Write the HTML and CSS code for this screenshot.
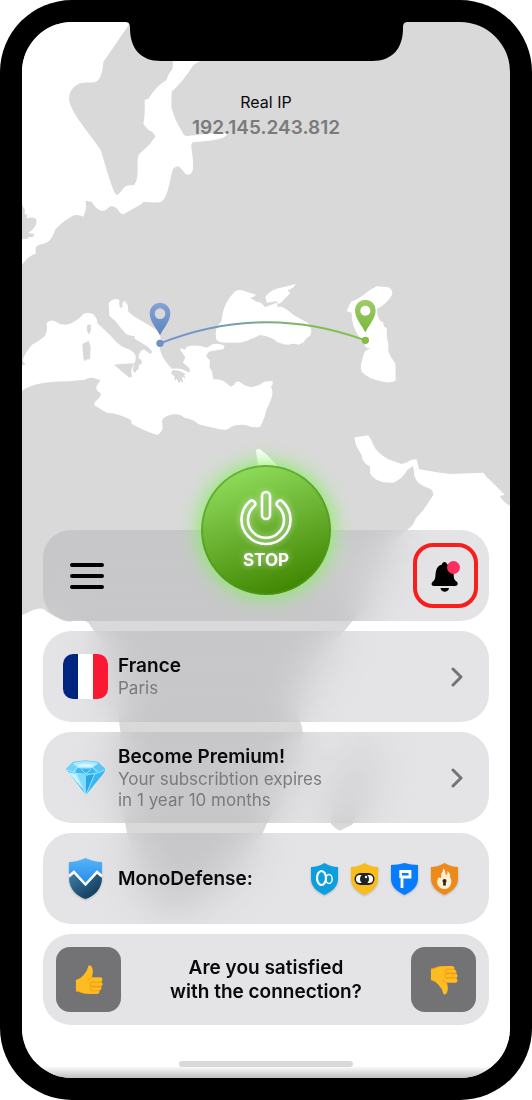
FILE: index.html
```html
<!DOCTYPE html>
<html lang="en">
<head>
    <meta charset="UTF-8">
    <meta name="viewport" content="width=device-width, initial-scale=1.0">
    <title>VPN</title>
    <link rel="stylesheet" href="styles.css">
</head>
<body>
    <div class="phone">
        <div class="screen">
            <svg class="map" viewBox="66 66 1464 3168" preserveAspectRatio="xMidYMax slice" aria-hidden="true">
                <defs>
                    <linearGradient id="route" x1="0" x2="1" y1="0" y2="0">
                        <stop offset="0.2" stop-color="#7394cd"/>
                        <stop offset="0.8" stop-color="#82bf48"/>
                    </linearGradient>
                    <linearGradient id="pinBlue" x1="0" x2="0" y1="0" y2="1">
                        <stop offset="0" stop-color="#84a2d6"/>
                        <stop offset="1" stop-color="#6084c0"/>
                    </linearGradient>
                    <linearGradient id="pinGreen" x1="0" x2="0" y1="0" y2="1">
                        <stop offset="0" stop-color="#a0cc6a"/>
                        <stop offset="1" stop-color="#78b83a"/>
                    </linearGradient>
                </defs>
                <g class="sea">
                    <!-- north and baltic sea -->
                    <path d="M60 60H386L388 72L310 186Q306 240 285 246C265 250 262 244 240 250Q207 264 207 295C207 335 270 400 302 450C318 500 330 550 346 582L352 585Q362 580 370 565Q378 554 403 555Q414 540 413 500Q411 466 420 460L445 437L466 410Q460 394 445 390L430 372Q436 340 434 300L445 296Q470 256 500 240Q502 225 518 206L519 180H606L580 195Q550 244 515 275L514 320Q524 360 545 392Q550 408 562 408L640 400L685 400Q672 420 620 423L580 427Q570 430 576 455Q582 500 577 515Q568 530 556 521Q540 500 533 499Q520 502 517 512C510 540 502 605 478 607Q450 608 432 605Q420 616 410 620L370 643Q358 640 355 630Q345 616 330 619Q315 636 305 632Q288 628 275 605L256 602Q260 614 257 630L250 650Q235 642 222 646Q190 662 165 690Q155 726 130 732Q108 734 107 745V762Q90 766 80 778L60 800V718L82 716Q84 710 100 710L103 703L85 698Q110 684 110 660Q105 648 80 655L82 644L74 642L75 630L60 605Z"/>
                    <!-- mediterranean -->
                    <path d="M60 1098L77 1093L68 1084Q70 1066 95 1035Q115 1025 135 1008Q144 990 139 970Q150 956 168 965Q185 978 205 973Q232 964 250 942Q266 936 280 943Q292 955 292 970L330 1005Q350 1030 370 1042Q398 1050 406 1065Q410 1080 402 1092L398 1112L406 1118Q410 1108 415 1108L417 1095L426 1090L424 1080L415 1074Q418 1052 432 1048L445 1058L453 1062L456 1054Q446 1040 430 1032L404 1016L404 1008Q382 1008 372 995L345 962L328 947L326 910Q335 896 352 897Q362 900 357 908L360 924L368 920Q364 908 373 902L383 915L385 935Q400 950 420 960Q450 976 472 992Q482 1002 482 1020L480 1050Q486 1072 500 1088L515 1106Q530 1104 545 1107L568 1118L558 1122L538 1112L518 1110L513 1120L524 1130V1144L530 1136L537 1150L542 1142L550 1150L546 1130L557 1136L552 1124L570 1116L568 1104L549 1088L556 1072L541 1050L544 1044L554 1050L560 1040Q590 1032 620 1043L640 1032Q660 1030 674 1038L670 1048L640 1052L626 1055L618 1068L630 1082L628 1100L636 1115L640 1138Q665 1136 680 1150L692 1160L702 1155Q708 1140 720 1146Q742 1164 760 1160Q780 1156 792 1145L818 1142V1152L813 1160L817 1172Q820 1190 800 1228Q792 1262 780 1280Q765 1286 735 1275Q700 1272 684 1288Q670 1292 640 1283Q614 1278 594 1272Q582 1258 555 1254Q540 1240 520 1243Q490 1248 486 1262L488 1285Q480 1305 470 1304Q440 1296 395 1272Q396 1258 380 1254Q355 1240 320 1238L283 1216Q283 1204 292 1200Q304 1188 302 1180Q284 1168 290 1158L302 1140L290 1137Q270 1128 255 1139L205 1144Q150 1144 110 1153Q80 1160 60 1178Z"/>
                    <!-- black sea and azov -->
                    <path d="M650 1020Q640 985 664 965Q668 920 690 892L705 874Q722 866 740 875L768 884Q762 892 750 893L770 905Q786 906 795 922L820 912L832 908V920H842Q856 922 880 945L925 970Q940 990 930 1008Q915 1016 912 1026L895 1034Q882 1028 865 1034Q850 1034 830 1025Q815 1010 780 1005Q745 1022 720 1028H680Q655 1028 650 1020Z"/>
                    <path d="M796 890Q810 872 830 866L888 852L880 862L862 873L872 878L848 903L838 912L828 904L800 908Z"/>
                    <!-- caspian -->
                    <path d="M1040 933L1053 905Q1080 896 1105 873L1130 859L1165 862Q1180 868 1176 886Q1160 912 1130 928L1134 950Q1140 966 1150 967Q1148 982 1161 984Q1158 1010 1165 1030V1055Q1172 1072 1186 1090L1187 1142Q1170 1150 1150 1145Q1105 1138 1086 1116Q1080 1108 1084 1090L1092 1060Q1094 1052 1110 1045Q1094 1044 1094 1034Q1068 1002 1060 975Q1054 955 1055 938Z"/>
                    <!-- persian gulf, indian ocean and atlantic around africa -->
                    <path d="M1063 1312L1075 1310L1105 1306Q1116 1322 1120 1335Q1130 1358 1165 1378L1205 1392Q1225 1386 1234 1379L1250 1378L1257 1408Q1300 1416 1350 1422L1450 1418Q1460 1434 1472 1442L1514 1484L1500 1488Q1510 1510 1540 1522V3240H60V1848L100 1830Q118 1822 132 1828Q146 1842 190 1862L210 1865Q240 1850 265 1868L280 1890L310 1940L345 2040L357 2165L362 2200L350 2320L376 2472L382 2505L440 2690Q500 2740 590 2700L700 2620L787 2502L802 2468L840 2390L880 2300L908 2200Q908 2176 896 2160L890 2080L960 1970L1033 1893L1060 1860L1130 1770L1110 1720L1200 1610L1238 1575L1248 1555L1270 1530L1300 1485Q1300 1468 1285 1464Q1240 1450 1242 1412L1238 1398L1222 1410Q1210 1430 1195 1440L1180 1448L1150 1447Q1120 1440 1110 1420V1400Q1085 1385 1086 1368L1068 1336Z"/>
                    <path d="M768 1352Q770 1344 780 1348L801 1364L835 1400L900 1540L1010 1680L1000 1720L960 1690L850 1540L775 1400Z"/>
                </g>
                <g class="land">
                    <path d="M262 975L272 972L273 990L267 1004L260 990Z"/>
                    <path d="M247 1032L266 1022L272 1040L270 1078L262 1078L252 1084L249 1064Z"/>
                    <path d="M342 1094L360 1092L402 1090L393 1112L396 1130L388 1133L372 1120Z"/>
                    <path d="M1000 2400L1060 2270L1120 2220L1115 2330L1062 2465Q1058 2476 1040 2482L1020 2492Q1004 2486 992 2470Z"/>
                </g>
                <path class="route" d="M480 1030Q790 908 1096 1021"/>
                <circle cx="480" cy="1030" r="11" fill="#7090c8"/>
                <circle cx="1096" cy="1021" r="11" fill="#7fbd43"/>
                <path fill="url(#pinBlue)" fill-rule="evenodd" d="M480 1006C470 984 449 966 449 939A31 31 0 0 1 511 939C511 966 490 984 480 1006ZM480 925A15 15 0 1 0 480 957A15 15 0 1 0 480 925Z"/>
                <path fill="url(#pinGreen)" d="M1096 997C1086 975 1065 957 1065 930A31 31 0 0 1 1127 930C1127 957 1106 975 1096 997Z"/>
                <circle cx="1096" cy="932" r="15" fill="#fff"/>
            </svg>

            <svg class="notch" viewBox="0 0 283 39" aria-hidden="true">
                <path d="M0 0C4 0 5 2 5 6C5 26 15 39 36 39H247C268 39 278 26 278 6C278 2 279 0 283 0Z"/>
            </svg>

            <header class="ip">
                <div class="ip-label">Real IP</div>
                <div class="ip-value">192.145.243.812</div>
            </header>

            <main class="cards">
                <nav class="card toolbar">
                    <button class="tool" aria-label="Menu">
                        <svg width="34" height="26" viewBox="0 0 34 26"><path d="M2 2H32M2 13H32M2 24H32" stroke="#000" stroke-width="4" stroke-linecap="round"/></svg>
                    </button>
                    <button class="power">
                        <svg width="56" height="56" viewBox="0 0 56 56" fill="none" stroke="#fff" stroke-width="2.6">
                            <rect x="24" y="2" width="8" height="27" rx="4"/>
                            <path d="M12 11A24.500 24.500 0 1 0 44 11C41 9 37 13 39.500 16A18 18 0 1 1 16.500 16C19 13 15 9 12 11Z" stroke-linejoin="round"/>
                        </svg>
                        STOP
                    </button>
                    <button class="tool alert" aria-label="Notifications">
                        <svg width="32" height="32" viewBox="0 0 32 32">
                            <path d="M4 26C1 26 1 23 3 21.500C6 19 5 16 6 11C7 7 9 5 12 4.500C12 1 17 1 17 4.500C21 5 23 8 23.500 11C24 16 23 19 26.500 21.500C28.500 23 28 26 25 26Z"/>
                            <path d="M10.500 28H19C18.500 33 11 33 10.500 28Z"/>
                            <circle cx="23.500" cy="7.500" r="6.500" fill="#fb3060"/>
                        </svg>
                    </button>
                </nav>

                <button class="card row">
                    <svg class="icon flag" viewBox="0 0 45 45" aria-hidden="true">
                        <path fill="#fff" d="M0 0H45V45H0Z"/>
                        <path fill="#00267f" d="M0 0H15V45H0Z"/>
                        <path fill="#f91933" d="M30 0H45V45H30Z"/>
                    </svg>
                    <span class="text">
                        <strong>France</strong>
                        <span class="sub">Paris</span>
                    </span>
                    <svg class="chevron" viewBox="0 0 13 20"><path d="M2 2L10 10L2 18"/></svg>
                </button>

                <button class="card row">
                    <svg class="icon" viewBox="0 0 45 45" aria-hidden="true">
                        <path fill="#35b8f5" d="M3 14L10 7Q22 4 35 7L42 14Q42 17 40 19L23 40Z"/>
                        <path fill="#a9e9ff" d="M9 8Q22 4 36 8L30 13Q22 14 14 13Z"/>
                        <path fill="#6fd3fb" d="M3 14L9 8L14 13L13 18L4 16Z"/>
                        <path fill="#59c6f8" d="M42 14L36 8L30 13L32 18L41 16Z"/>
                        <path fill="#d6f6ff" d="M14 10Q22 7 31 10L28 12H17Z"/>
                        <path fill="#80dcff" d="M13 18L23 20L32 18L23 40Z"/>
                        <path fill="#2aa4eb" d="M23 21L32 18L23 40Z"/>
                        <path fill="#c8f3ff" d="M5 17L13 19L20 34L17 31Z"/>
                        <path d="M4 15Q13 20 23 19Q34 20 41 15M13 18L23 40L32 18M14 13L10 17M30 13L35 17M18 14L23 19L28 14" fill="none" stroke="#c9f4ff" stroke-width="0.7"/>
                    </svg>
                    <span class="text">
                        <strong>Become Premium!</strong>
                        <span class="sub">Your subscribtion expires<br>in 1 year 10 months</span>
                    </span>
                    <svg class="chevron" viewBox="0 0 13 20"><path d="M2 2L10 10L2 18"/></svg>
                </button>

                <section class="card row defense">
                    <svg class="icon shadow" viewBox="0 0 45 45" aria-hidden="true">
                        <defs>
                            <linearGradient id="shieldTop" x1="0" x2="0" y1="0" y2="1">
                                <stop offset="0" stop-color="#55b4f8"/>
                                <stop offset="1" stop-color="#258bea"/>
                            </linearGradient>
                            <linearGradient id="shieldLow" x1="0" x2="1" y1="0" y2="1">
                                <stop offset="0" stop-color="#3e7fa8"/>
                                <stop offset="1" stop-color="#082d4b"/>
                            </linearGradient>
                        </defs>
                        <path fill="url(#shieldTop)" d="M22.500 2Q31 6 39 6V20L34 16L22.500 28L11 16L6 20V6Q14 6 22.500 2Z"/>
                        <path fill="url(#shieldLow)" d="M6 22L11 18L22.500 30L34 18L39 22C39 32 32 40 22.500 43C13 40 6 32 6 22Z"/>
                        <path d="M6 20L11 16L22.500 28.500L34 16L39 20" fill="none" stroke="#fff" stroke-width="2.500"/>
                    </svg>
                    <strong class="text">MonoDefense:</strong>
                    <div class="shields">
                        <svg class="shield shadow" viewBox="0 0 27 32" aria-hidden="true">
                            <path fill="#0d9ee0" d="M13.500 0Q20 4 27 4V16C27 24 20 29 13.500 32C7 29 0 24 0 16V4Q7 4 13.500 0Z"/>
                            <g fill="none" stroke="#fff">
                                <ellipse cx="10.500" cy="15" rx="4.500" ry="7" stroke-width="2.200"/>
                                <ellipse cx="18" cy="16" rx="3.200" ry="4.500" stroke-width="1.500"/>
                            </g>
                        </svg>
                        <svg class="shield shadow" viewBox="0 0 27 32" aria-hidden="true">
                            <path fill="#f8bd1c" d="M13.500 0Q20 4 27 4V16C27 24 20 29 13.500 32C7 29 0 24 0 16V4Q7 4 13.500 0Z"/>
                            <rect x="3.500" y="10" width="20" height="12" rx="6" fill="#222"/>
                            <rect x="5" y="12" width="17" height="8" rx="4" fill="#fff"/>
                            <ellipse cx="13.500" cy="16" rx="4.500" ry="5" fill="#222"/>
                            <circle cx="15" cy="14" r="1.200" fill="#fff"/>
                        </svg>
                        <svg class="shield shadow" viewBox="0 0 27 32" aria-hidden="true">
                            <path fill="#087cff" d="M13.500 0Q20 2 27 2V16C27 24 20 29 13.500 32C7 29 0 24 0 16V2Q7 2 13.500 0Z"/>
                            <path d="M9 8.500H19V14H11V25" fill="none" stroke="#fff" stroke-width="2.800"/>
                            <path d="M9.600 7V15" stroke="#fff" stroke-width="2.600"/>
                        </svg>
                        <svg class="shield shadow" viewBox="0 0 27 32" aria-hidden="true">
                            <path fill="#ec8a1c" d="M13.500 0Q20 4 27 4V16C27 24 20 29 13.500 32C7 29 0 24 0 16V4Q7 4 13.500 0Z"/>
                            <path fill="#fff0d4" d="M12 5C15 8 14 10 15 12Q17 11 16.500 8Q20 11 19 14C22 18 20 26 13.500 26C7 26 4 19 8 14Q9 16 10.500 14C9 10 13 9 12 5Z"/>
                            <circle cx="13.500" cy="18" r="2" fill="#3a2310"/>
                            <path fill="#3a2310" d="M12.500 18H14.500L15 22.500H12Z"/>
                        </svg>
                    </div>
                </section>

                <section class="card feedback">
                    <button class="vote" aria-label="Yes">
                        <svg viewBox="0 0 30 32" width="28" height="30">
                            <use href="#thumb"/>
                        </svg>
                    </button>
                    <p>Are you satisfied<br>with the connection?</p>
                    <button class="vote" aria-label="No">
                        <svg viewBox="0 0 30 32" width="28" height="30">
                            <defs>
                                <g id="thumb">
                                    <path fill="#fcbc22" d="M1 16Q6 15 9 11Q13 7 14 2C14 0 17 0 18 2C20 6 19 10 18 13H27C30 13 30 17 28 18C30 19 30 22 28 23C29 25 28 27 26 27C27 29 26 31 23 31H13C9 31 5 28 1 28Z"/>
                                    <path fill="#f59a12" d="M17 17Q20 18 28 18V19H18ZM17 22Q20 23 28 22V24H18ZM17 26Q20 28 26 27V28H18ZM1 27Q6 28 9 30Q15 31 24 31H13C9 31 5 29 1 28Z"/>
                                    <path fill="none" stroke="#f39b12" d="M18 13Q15 14 14 16M17 18Q15 21 17 23Q15 25 17 27"/>
                                </g>
                            </defs>
                            <use href="#thumb" transform="matrix(1 0 0 -1 0 32)"/>
                        </svg>
                    </button>
                </section>
            </main>

            <div class="home-bar"></div>
        </div>
    </div>
</body>
</html>
```
FILE: styles.css
```css
* {
    margin: 0;
    padding: 0;
    box-sizing: border-box;
}

body {
    background-color: #ffffff;
    color: #0a0a0c;
    font-family: Inter, "Liberation Sans", sans-serif;
}

button {
    border: none;
    background: none;
    color: inherit;
    font: inherit;
    cursor: pointer;
}

.phone {
    display: flex;
    min-height: 100vh;
    padding: 22px;
    background-color: #000000;
    border-radius: 72px;
}

.screen {
    position: relative;
    flex: 1;
    display: flex;
    flex-direction: column;
    align-items: center;
    overflow: hidden;
    border-radius: 50px;
    background-color: #d9d9d9;
}

/* dark fade along the bottom edge */
.screen::after {
    content: "";
    position: absolute;
    left: 0;
    right: 0;
    bottom: 0;
    height: 12px;
    background-image: linear-gradient(#00000000, #00000040);
}

.map {
    position: absolute;
    top: 0;
    left: 0;
    width: 100%;
    height: 100%;
}

.sea {
    fill: #ffffff;
}

.land {
    fill: #d9d9d9;
}

.route {
    fill: none;
    stroke: url(#route);
    stroke-width: 6;
}

.notch {
    position: absolute;
    top: 0;
    width: 283px;
    height: 39px;
}

.ip {
    position: relative;
    padding-top: 68px;
    text-align: center;
}

.ip-label {
    font-size: 16px;
    line-height: 24px;
}

.ip-value {
    color: #7a7a7c;
    font-size: 19px;
    font-weight: 600;
    line-height: 28px;
}

.cards {
    position: relative;
    z-index: 1;
    display: flex;
    flex-direction: column;
    gap: 10px;
    width: 100%;
    margin-top: auto;
    padding: 40px 21px 36px;
}

.card {
    position: relative;
    display: flex;
    align-items: center;
    min-height: 91px;
    border-radius: 28px;
    background-color: #8e8e963d;
}

/* frosted glass: two passes, one alone leaves the coast lines readable */
.card::before,
.card::after {
    content: "";
    position: absolute;
    inset: 0;
    z-index: -1;
    border-radius: 28px;
    -webkit-backdrop-filter: blur(16px);
    backdrop-filter: blur(16px);
}

.card strong,
.feedback p {
    font-size: 19px;
    font-weight: 600;
    line-height: 24px;
}

.toolbar {
    justify-content: space-between;
    padding: 0 11px;
}

.tool {
    display: flex;
    align-items: center;
    justify-content: center;
    width: 65px;
    height: 65px;
}

.alert {
    border: 4px solid #f71e1e;
    border-radius: 20px;
}

.power {
    position: absolute;
    left: 50%;
    top: 0;
    transform: translate(-50%, -50%);
    display: flex;
    flex-direction: column;
    align-items: center;
    justify-content: center;
    gap: 4px;
    width: 130px;
    height: 130px;
    border: 2px solid #4f9a1c99;
    border-radius: 50%;
    background-image: linear-gradient(160deg, #98e765, #6db534 45%, #3f8500 90%);
    background-origin: border-box;
    box-shadow: 0 0 20px 2px #85ef60;
    color: #ffffff;
    font-size: 17px;
    font-weight: 700;
    line-height: 20px;
    text-shadow: 0 0 6px #ffffff99;
}

.power svg {
    filter: drop-shadow(0 0 3px #ffffff99);
}

.row {
    gap: 10px;
    padding: 0 25px 0 20px;
    text-align: left;
}

.icon {
    flex: none;
    width: 45px;
    height: 45px;
}

.flag {
    border-radius: 10px;
}

.text {
    flex: 1;
}

.row strong,
.sub {
    display: block;
}

.sub {
    color: #7a7a7c;
    font-size: 17px;
    line-height: 21px;
}

.chevron {
    width: 13px;
    height: 20px;
    fill: none;
    stroke: #737375;
    stroke-width: 3;
    stroke-linecap: round;
    stroke-linejoin: round;
}

.defense {
    padding-right: 31px;
}

.shields {
    display: flex;
    gap: 13px;
}

.shield {
    width: 27px;
    height: 32px;
}

.shadow {
    overflow: visible;
    filter: drop-shadow(0 1px 1px #00000033);
}

.feedback {
    justify-content: space-between;
    padding: 0 13px;
    text-align: center;
}

.vote {
    display: flex;
    align-items: center;
    justify-content: center;
    width: 65px;
    height: 65px;
    border-radius: 14px;
    background-color: #737375;
}

.home-bar {
    position: relative;
    width: 174px;
    height: 6px;
    margin-bottom: 11px;
    border-radius: 3px;
    background-color: #d9d9d9;
}
```
